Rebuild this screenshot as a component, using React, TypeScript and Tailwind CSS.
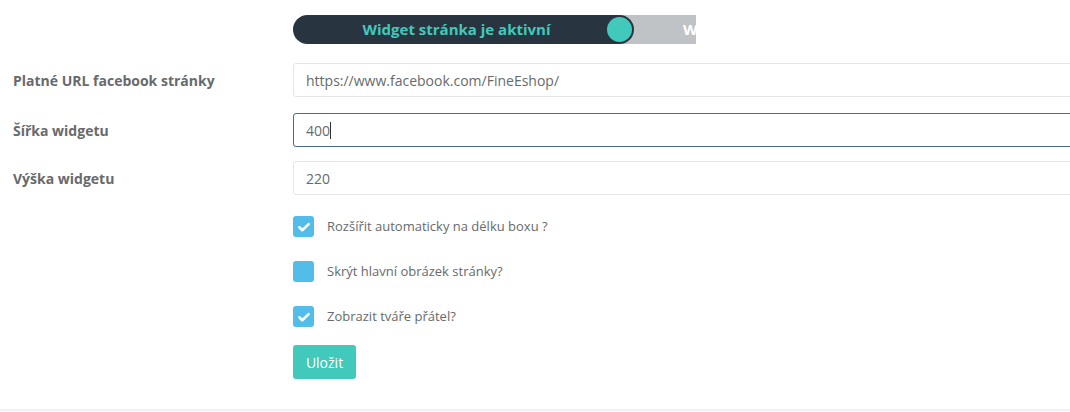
import React from "react";

const font = { fontFamily: '"Open Sans", "Liberation Sans", sans-serif' };

const Check = () => (
  <svg viewBox="0 0 24 24" className="w-[14px] h-[14px]" fill="none" stroke="white" strokeWidth={4.5} strokeLinecap="round" strokeLinejoin="round">
    <path d="M4 12.5l5 5L20 7" />
  </svg>
);

const CheckRow = ({ checked, label }: { checked: boolean; label: string }) => (
  <div className="flex items-center h-[21px]">
    <div className="w-[21px] h-[21px] rounded-[3px] bg-[#52bde8] flex items-center justify-center">
      {checked && <Check />}
    </div>
    <span className="ml-[13px] text-[13px] text-[#676a6c]">{label}</span>
  </div>
);

const Field = ({ label, value, focused, className }: { label: string; value: string; focused?: boolean; className?: string }) => (
  <div className={"grid grid-cols-[293px_1fr] items-center " + (className ?? "")}>
    <label className="pl-[13px] text-[14px] font-bold text-[#676a6c]">{label}</label>
    <div
      className={
        "h-[34px] w-[800px] rounded-[3px] border bg-white px-[12px] flex items-center text-[14px] text-[#676a6c] " +
        (focused ? "border-[#4a6a8f]" : "border-[#e5e6e7]")
      }
    >
      {value}
      {focused && <span className="inline-block w-px h-[17px] bg-[#333]" />}
    </div>
  </div>
);

export default function App() {
  return (
    <div className="h-[411px] w-full overflow-hidden bg-white border-b-2 border-[#f1f0f6]" style={font}>
      <div className="pt-[15px] pl-[293px]">
        <div className="flex h-[29px] w-[403px] overflow-hidden">
          <div className="relative z-10 flex w-[341px] shrink-0 items-center rounded-full bg-[#283541]">
            <span className="w-[327px] text-center text-[15px] font-bold text-[#41c9bb]">Widget stránka je aktivní</span>
            <span className="absolute right-[2px] top-[2px] h-[25px] w-[25px] rounded-full bg-[#41c9bb]" />
          </div>
          <div className="-ml-[14px] flex flex-1 items-center bg-[#bfc3c6] pl-[63px]">
            <span className="whitespace-nowrap text-[15px] font-bold text-white">Widget stránka je neaktivní</span>
          </div>
        </div>
      </div>

      <Field className="mt-[19px]" label="Platné URL facebook stránky" value="https://www.facebook.com/FineEshop/" />
      <Field className="mt-[16px]" label="Šířka widgetu" value="400" focused />
      <Field className="mt-[14px]" label="Výška widgetu" value="220" />

      <div className="pl-[293px] mt-[21px] flex flex-col gap-[24px]">
        <CheckRow checked label="Rozšířit automaticky na délku boxu ?" />
        <CheckRow checked={false} label="Skrýt hlavní obrázek stránky?" />
        <CheckRow checked label="Zobrazit tváře přátel?" />
        <button className="mt-[-6px] w-[63px] h-[34px] rounded-[3px] bg-[#41c9bb] text-[14px] text-white">Uložit</button>
      </div>
    </div>
  );
}
